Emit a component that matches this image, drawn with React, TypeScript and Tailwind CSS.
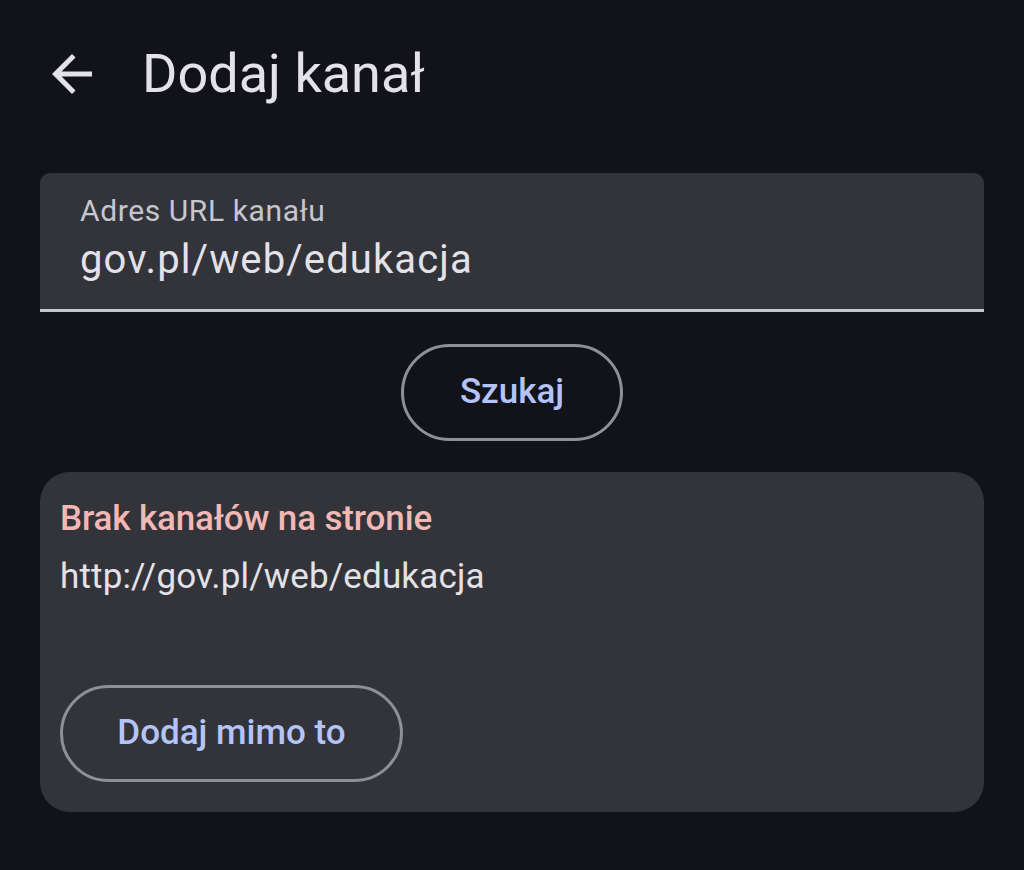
import React, { useState } from 'react';

const font = { fontFamily: 'Roboto, "Noto Sans", sans-serif' };

const BackArrow: React.FC = () => (
  <svg viewBox="0 0 24 24" className="w-[60px] h-[60px]" fill="#e3e2e9">
    <path d="M20 11H7.83l5.59-5.59L12 4l-8 8 8 8 1.41-1.41L7.83 13H20v-2z" />
  </svg>
);

const App: React.FC = () => {
  const [url, setUrl] = useState('gov.pl/web/edukacja');

  return (
    <div className="min-h-screen w-full bg-[#121318] text-[#e3e2e9]" style={font}>
      {/* top bar */}
      <header className="h-[150px] flex items-center pl-[42px] pb-[2px]">
        <button className="w-[60px] h-[60px] flex items-center justify-center">
          <BackArrow />
        </button>
        <h1 className="ml-[40px] text-[54px] leading-none font-normal text-[#e3e2e9]">Dodaj kanał</h1>
      </header>

      <main className="px-[40px] pt-[23px] flex flex-col">
        {/* filled text field */}
        <div className="h-[139px] bg-[#33343a] rounded-t-[10px] border-b-[3px] border-[#c5c6d0] px-[40px] pt-[18px] flex flex-col">
          <label className="text-[30px] leading-[40px] tracking-[0.6px] text-[#c5c6d0]">Adres URL kanału</label>
          <input
            value={url}
            onChange={(e) => setUrl(e.target.value)}
            className="mt-[4px] bg-transparent outline-none text-[40px] leading-[50px] text-[#e3e2e9] tracking-[1.1px]"
            style={font}
          />
        </div>

        <div className="flex justify-center pt-[32px]">
          <button className="w-[222px] h-[97px] rounded-full border-[3px] border-[#8e9099] text-[#b4c4fb] text-[35px] font-medium">
            Szukaj
          </button>
        </div>

        {/* result card */}
        <section className="mt-[31px] h-[340px] bg-[#33343a] rounded-[30px] px-[20px] pt-[24px] flex flex-col">
          <h2 className="text-[35px] leading-[46px] font-medium tracking-[-0.15px] text-[#f2b8b5]">Brak kanałów na stronie</h2>
          <p className="mt-[12px] text-[35px] leading-[46px] tracking-[0.15px] text-[#e3e2e9]">http://gov.pl/web/edukacja</p>
          <div className="mt-auto pb-[30px]">
            <button className="w-[343px] h-[97px] rounded-full border-[3px] border-[#8e9099] text-[#b4c4fb] text-[35px] font-medium">
              Dodaj mimo to
            </button>
          </div>
        </section>
      </main>
    </div>
  );
};

export default App;
